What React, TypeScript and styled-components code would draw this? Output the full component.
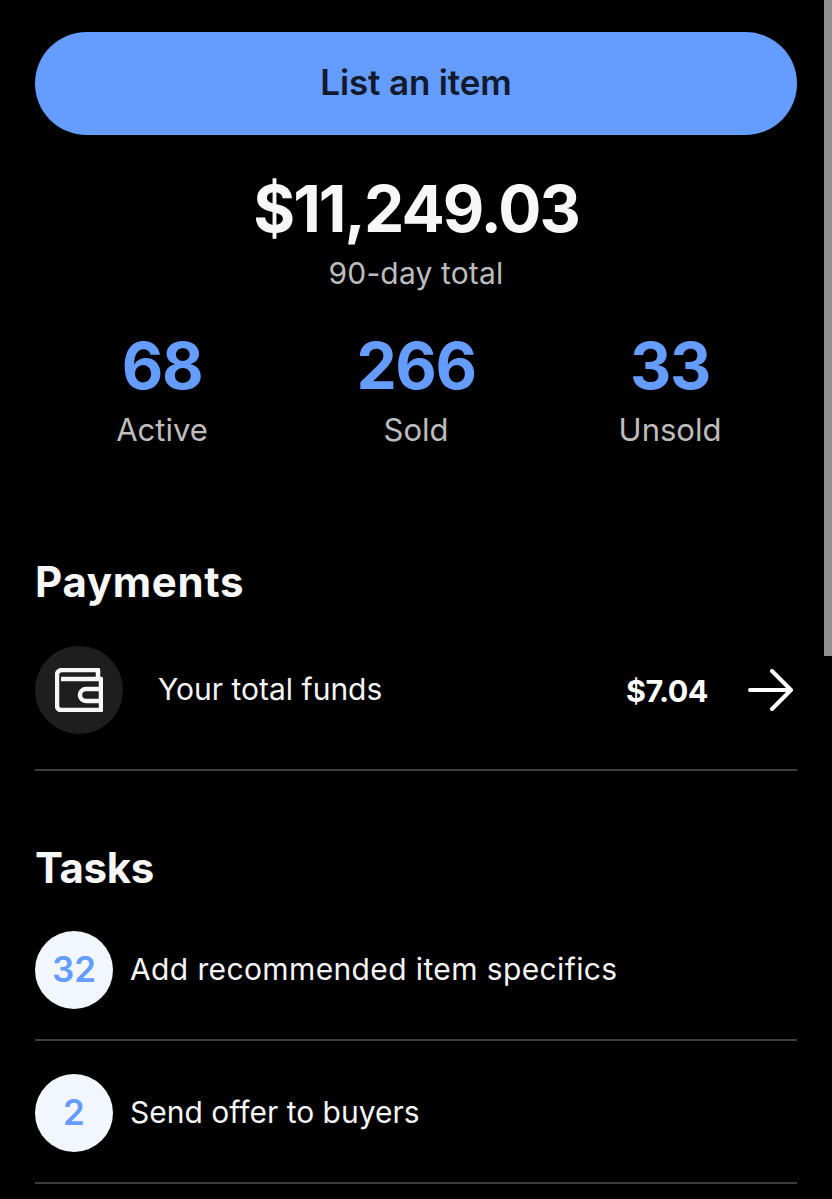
import React from 'react';
import styled, { createGlobalStyle } from 'styled-components';

const Global = createGlobalStyle`
  html, body {
    margin: 0;
    background: #000;
    overflow: hidden;
  }
  body {
    font-family: Inter, "Liberation Sans", sans-serif;
    color: #fff;
  }
`;

const Page = styled.div`
  position: relative;
  width: 832px;
  height: 1199px;
  overflow: hidden;
  background: #000;
  box-sizing: border-box;
  padding: 32px 35px 0;
`;

const Scrollbar = styled.div`
  position: absolute;
  top: 0;
  right: 0;
  width: 8px;
  height: 656px;
  background: #8f8f8f;
`;

const ListButton = styled.button`
  display: block;
  width: 100%;
  height: 103px;
  padding: 0 0 3px;
  border: 0;
  border-radius: 52px;
  background: #659cff;
  color: #121a2e;
  font-family: inherit;
  font-size: 35px;
  font-weight: 600;
  letter-spacing: -0.15px;
`;

const Total = styled.div`
  margin-top: 37px;
  text-align: center;
  font-size: 64px;
  line-height: 74px;
  font-weight: 700;
  letter-spacing: -1.9px;
  color: #f7f7f7;
`;

const TotalLabel = styled.div`
  margin-top: 9px;
  text-align: center;
  font-size: 30px;
  line-height: 36px;
  letter-spacing: 0.15px;
  color: #bdbdbd;
`;

const Stats = styled.div`
  display: grid;
  grid-template-columns: repeat(3, 1fr);
  margin-top: 37px;
`;

const Stat = styled.div`
  text-align: center;
`;

const StatValue = styled.div`
  font-size: 64px;
  line-height: 76px;
  font-weight: 700;
  letter-spacing: -1.4px;
  color: #659cff;
`;

const StatLabel = styled.div`
  margin-top: 8px;
  font-size: 31px;
  line-height: 36px;
  color: #bdbdbd;
`;

const Heading = styled.h2<{ $top: number; $tracking: number }>`
  margin: ${(p) => p.$top}px 0 0;
  font-size: 42px;
  line-height: 48px;
  font-weight: 700;
  letter-spacing: ${(p) => p.$tracking}px;
  color: #f7f7f7;
`;

const FundsRow = styled.div`
  display: flex;
  align-items: center;
  height: 88px;
  margin-top: 40px;
  padding-bottom: 35px;
  border-bottom: 2px solid #3d3d3d;
`;

const IconCircle = styled.div`
  flex: none;
  display: flex;
  align-items: center;
  justify-content: center;
  width: 88px;
  height: 88px;
  border-radius: 50%;
  background: #1e1e1e;
`;

const RowText = styled.span<{ $tracking?: number }>`
  padding-bottom: 2px;
  font-size: 30px;
  font-weight: 400;
  letter-spacing: ${(p) => p.$tracking ?? 0}px;
  color: #f5f5f5;
`;

const FundsText = styled(RowText)`
  margin-left: 35px;
  flex: 1;
`;

const Amount = styled.span`
  font-size: 30.5px;
  font-weight: 700;
  letter-spacing: -0.5px;
  color: #fff;
`;

const Arrow = styled.svg`
  flex: none;
  width: 46px;
  height: 42px;
  margin: 0 3px 0 40px;
`;

const TaskRow = styled.div<{ $top: number }>`
  display: flex;
  align-items: center;
  gap: 17px;
  height: 78px;
  margin-top: ${(p) => p.$top}px;
  padding-bottom: 30px;
  border-bottom: 2px solid #3d3d3d;
`;

const Badge = styled.div`
  flex: none;
  display: flex;
  align-items: center;
  justify-content: center;
  box-sizing: border-box;
  width: 78px;
  height: 78px;
  padding-bottom: 3px;
  border-radius: 50%;
  background: #f2f7ff;
  color: #659cff;
  font-size: 35px;
  font-weight: 600;
`;

export default function App() {
  return (
    <Page>
      <Global />
      <Scrollbar />
      <ListButton>List an item</ListButton>
      <Total>$11,249.03</Total>
      <TotalLabel>90-day total</TotalLabel>
      <Stats>
        <Stat>
          <StatValue>68</StatValue>
          <StatLabel>Active</StatLabel>
        </Stat>
        <Stat>
          <StatValue>266</StatValue>
          <StatLabel>Sold</StatLabel>
        </Stat>
        <Stat>
          <StatValue>33</StatValue>
          <StatLabel>Unsold</StatLabel>
        </Stat>
      </Stats>
      <Heading $top={110} $tracking={0.7}>Payments</Heading>
      <FundsRow>
        <IconCircle>
          <svg width="48" height="44" viewBox="0 0 48 44" fill="none" stroke="#f7f7f7" strokeWidth="4.5" strokeLinejoin="round">
            <path d="M2 7a5 5 0 0 1 5-5H43V11" />
            <path d="M2 7V38a4 4 0 0 0 4 4H46V11H6" />
            <path d="M46 21H31a6 6 0 0 0 0 12H46" />
          </svg>
        </IconCircle>
        <FundsText>Your total funds</FundsText>
        <Amount>$7.04</Amount>
        <Arrow viewBox="0 0 46 42" fill="none" stroke="#fff" strokeWidth="4" strokeLinecap="round" strokeLinejoin="round">
          <path d="M2 21H43M24 2L43 21L24 40" />
        </Arrow>
      </FundsRow>
      <Heading $top={73} $tracking={-0.4}>Tasks</Heading>
      <TaskRow $top={39}>
        <Badge>32</Badge>
        <RowText $tracking={0.38}>Add recommended item specifics</RowText>
      </TaskRow>
      <TaskRow $top={33}>
        <Badge>2</Badge>
        <RowText>Send offer to buyers</RowText>
      </TaskRow>
    </Page>
  );
}
